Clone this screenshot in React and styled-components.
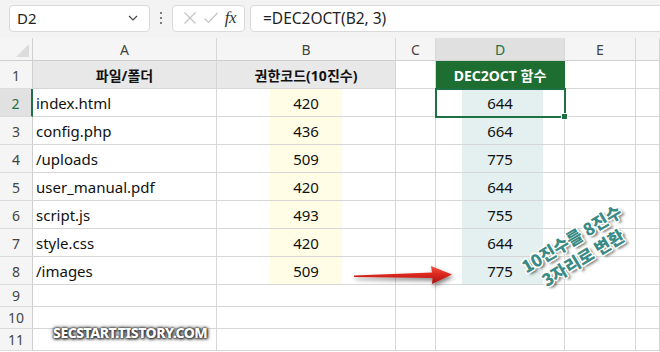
import styled, { createGlobalStyle } from 'styled-components';

const GlobalStyle = createGlobalStyle`
  html, body {
    margin: 0;
    padding: 0;
    background: #ffffff;
  }
  body {
    font-family: "Noto Sans", "Noto Sans CJK KR", sans-serif;
    color: #1f1f1f;
  }
`;

const files = [
  { name: 'index.html', code: 420, oct: 644 },
  { name: 'config.php', code: 436, oct: 664 },
  { name: '/uploads', code: 509, oct: 775 },
  { name: 'user_manual.pdf', code: 420, oct: 644 },
  { name: 'script.js', code: 493, oct: 755 },
  { name: 'style.css', code: 420, oct: 644 },
  { name: '/images', code: 509, oct: 775 },
];

const columns = ['A', 'B', 'C', 'D', 'E', ''];

function App() {
  return (
    <Page>
      <GlobalStyle />
      <TopBar>
        <NameBox>
          <span>D2</span>
          <svg width="12" height="8" viewBox="0 0 12 8">
            <path d="M2 2 L6 6 L10 2" fill="none" stroke="#444" strokeWidth="1.2" />
          </svg>
        </NameBox>
        <Dots>
          <i /><i /><i />
        </Dots>
        <FxBox>
          <svg width="14" height="14" viewBox="0 0 14 14">
            <path d="M1.5 1.5 L12.5 12.5 M12.5 1.5 L1.5 12.5" stroke="#c4c4c4" strokeWidth="1.2" />
          </svg>
          <svg width="16" height="14" viewBox="0 0 16 14">
            <path d="M1.5 7.5 L5.5 11.5 L14.5 2" fill="none" stroke="#c4c4c4" strokeWidth="1.2" />
          </svg>
          <Fx>fx</Fx>
        </FxBox>
        <FormulaBox>=DEC2OCT(B2, 3)</FormulaBox>
      </TopBar>

      <Sheet>
        <Corner />
        {columns.map((c) => (
          <ColHeader key={c || 'F'} $active={c === 'D'}>{c}</ColHeader>
        ))}

        <RowHeader>1</RowHeader>
        <Cell $head>파일/폴더</Cell>
        <Cell $head>권한코드(10진수)</Cell>
        <Cell />
        <Cell $green>DEC2OCT 함수</Cell>
        <Cell />
        <Cell />

        {files.map((f, i) => (
          <Row key={f.name}>
            <RowHeader $active={i === 0}>{i + 2}</RowHeader>
            <Cell $left>{f.name}</Cell>
            <Cell $stripe="#fffde6" $from={53} $to={125}>{f.code}</Cell>
            <Cell />
            <Cell $stripe="#e4f0f0" $from={26} $to={107} $selected={i === 0}>{f.oct}</Cell>
            <Cell />
            <Cell />
          </Row>
        ))}

        {[9, 10, 11].map((n) => (
          <Row key={n}>
            <RowHeader $short>{n}</RowHeader>
            <Cell />
            <Cell />
            <Cell />
            <Cell />
            <Cell />
            <Cell />
          </Row>
        ))}
      </Sheet>

      <Arrow width="104" height="26" viewBox="0 0 104 26">
        <defs>
          <linearGradient id="arrowFill" x1="0" y1="0" x2="0" y2="1">
            <stop offset="0" stopColor="#f25447" />
            <stop offset="0.45" stopColor="#dc2820" />
            <stop offset="1" stopColor="#a5140e" />
          </linearGradient>
          <filter id="arrowShadow" x="-10%" y="-40%" width="130%" height="200%">
            <feDropShadow dx="1.5" dy="2.5" stdDeviation="2" floodColor="#000" floodOpacity="0.5" />
          </filter>
        </defs>
        <path
          d="M2 12.5 L80 9.5 L79 3 L100 11.5 L80 21 L80.5 15 L2 14 Z"
          fill="url(#arrowFill)"
          filter="url(#arrowShadow)"
        />
      </Arrow>

      <Caption>
        <span>10진수를 8진수</span>
        <span>3자리로 변환</span>
      </Caption>

      <Watermark>SECSTART.TISTORY.COM</Watermark>
    </Page>
  );
}

const Page = styled.div`
  position: relative;
  width: 660px;
  height: 352px;
  overflow: hidden;
  background: #ffffff;
`;

const TopBar = styled.div`
  height: 38px;
  background: #f3f3f3;
  display: flex;
  align-items: center;
  padding-left: 9px;
  padding-bottom: 2px;
  box-sizing: border-box;
`;

const Box = styled.div`
  height: 27px;
  box-sizing: border-box;
  background: #ffffff;
  border: 1px solid #dadada;
  border-radius: 4px;
  display: flex;
  align-items: center;
`;

const NameBox = styled(Box)`
  width: 141px;
  justify-content: space-between;
  padding: 0 10px 0 7px;
  font-size: 15px;
  color: #222;
`;

const Dots = styled.div`
  width: 22px;
  display: flex;
  flex-direction: column;
  align-items: center;
  gap: 3px;

  i {
    width: 2px;
    height: 2px;
    background: #555;
    border-radius: 1px;
  }
`;

const FxBox = styled(Box)`
  width: 73px;
  justify-content: space-between;
  padding: 0 8px 0 10px;
`;

const Fx = styled.span`
  font-family: "Liberation Serif", serif;
  font-style: italic;
  font-size: 17px;
  color: #333;
  letter-spacing: -0.5px;
`;

const FormulaBox = styled(Box)`
  flex: 1;
  margin-left: 5px;
  margin-right: -6px;
  padding-left: 12px;
  font-size: 15.5px;
  color: #1f1f1f;
`;

const Sheet = styled.div`
  display: grid;
  grid-template-columns: 33px 184px 179px 40px 129px 71px 1fr;
  grid-template-rows: 23px repeat(8, 28px) repeat(3, 22px);
`;

const Row = styled.div`
  display: contents;
`;

const Corner = styled.div`
  position: relative;
  background: #f5f5f5;
  border-right: 1px solid #cfcfcf;
  border-bottom: 1px solid #cfcfcf;

  &::after {
    content: '';
    position: absolute;
    right: 3px;
    bottom: 3px;
    border-style: solid;
    border-width: 0 0 13px 13px;
    border-color: transparent transparent #dcdcdc transparent;
  }
`;

const ColHeader = styled.div`
  background: ${(p) => (p.$active ? '#e0e0e0' : '#f5f5f5')};
  color: ${(p) => (p.$active ? '#1e7145' : '#444')};
  border-right: 1px solid #d8d8d8;
  border-bottom: 1px solid #cfcfcf;
  font-size: 14px;
  display: flex;
  align-items: center;
  justify-content: center;
`;

const RowHeader = styled.div`
  background: ${(p) => (p.$active ? '#e1e1e1' : '#f5f5f5')};
  color: ${(p) => (p.$active ? '#1e7145' : '#444')};
  border-right: ${(p) => (p.$active ? '2px solid #1e7145' : '1px solid #cfcfcf')};
  border-bottom: 1px solid #dcdcdc;
  font-size: 14px;
  display: flex;
  align-items: flex-end;
  justify-content: center;
  padding-bottom: ${(p) => (p.$short ? '1px' : '3px')};
  box-sizing: border-box;
`;

const Cell = styled.div`
  position: relative;
  box-sizing: border-box;
  border-right: 1px solid #d6d6d6;
  border-bottom: 1px solid #d6d6d6;
  display: flex;
  align-items: center;
  justify-content: ${(p) => (p.$left ? 'flex-start' : 'center')};
  padding-left: ${(p) => (p.$left ? '3px' : '0')};
  padding-top: 1px;
  font-size: 15px;
  color: #111;
  white-space: nowrap;
  font-weight: ${(p) => (p.$head || p.$green ? 700 : 400)};
  ${(p) => p.$head && 'font-size: 14px; background: #e8e8e8;'}
  ${(p) => p.$green && 'font-size: 14px; background: #1f6e31; color: #ffffff; border-right-color: #1f6e31;'}
  ${(p) =>
    p.$stripe &&
    `background: linear-gradient(90deg, transparent ${p.$from}px, ${p.$stripe} ${p.$from}px, ${p.$stripe} ${p.$to}px, transparent ${p.$to}px);`}
  ${(p) =>
    p.$selected &&
    `z-index: 2;
     outline: 2px solid #1e7145;
     outline-offset: -1px;
     &::after {
       content: '';
       position: absolute;
       right: -4px;
       bottom: -4px;
       width: 5px;
       height: 5px;
       background: #1e7145;
       border: 1px solid #ffffff;
     }`}
`;

const Arrow = styled.svg`
  position: absolute;
  left: 352px;
  top: 263px;
  overflow: visible;
`;

const Caption = styled.div`
  position: absolute;
  left: 502px;
  top: 226px;
  width: 150px;
  display: flex;
  flex-direction: column;
  align-items: center;
  transform: rotate(-31deg);
  font-family: "Noto Sans CJK KR", "Noto Sans", sans-serif;
  font-weight: 900;
  font-size: 17px;
  line-height: 22px;
  color: #3a8a85;
  white-space: nowrap;
  text-shadow:
    -1px -1px 0 #fff, 1px -1px 0 #fff, -1px 1px 0 #fff, 1px 1px 0 #fff,
    0 -1.5px 0 #fff, 0 1.5px 0 #fff, -1.5px 0 0 #fff, 1.5px 0 0 #fff,
    2px 3px 3px rgba(0, 0, 0, 0.65);
`;

const Watermark = styled.div`
  position: absolute;
  left: 53px;
  top: 323px;
  font-family: "Noto Sans", sans-serif;
  font-weight: 800;
  font-size: 14px;
  letter-spacing: -0.5px;
  color: #ffffff;
  text-shadow:
    0 0 2px #333, 0 0 3px #333, 1px 1px 3px #222, 0 0 5px rgba(0, 0, 0, 0.6);
`;

export default App;
